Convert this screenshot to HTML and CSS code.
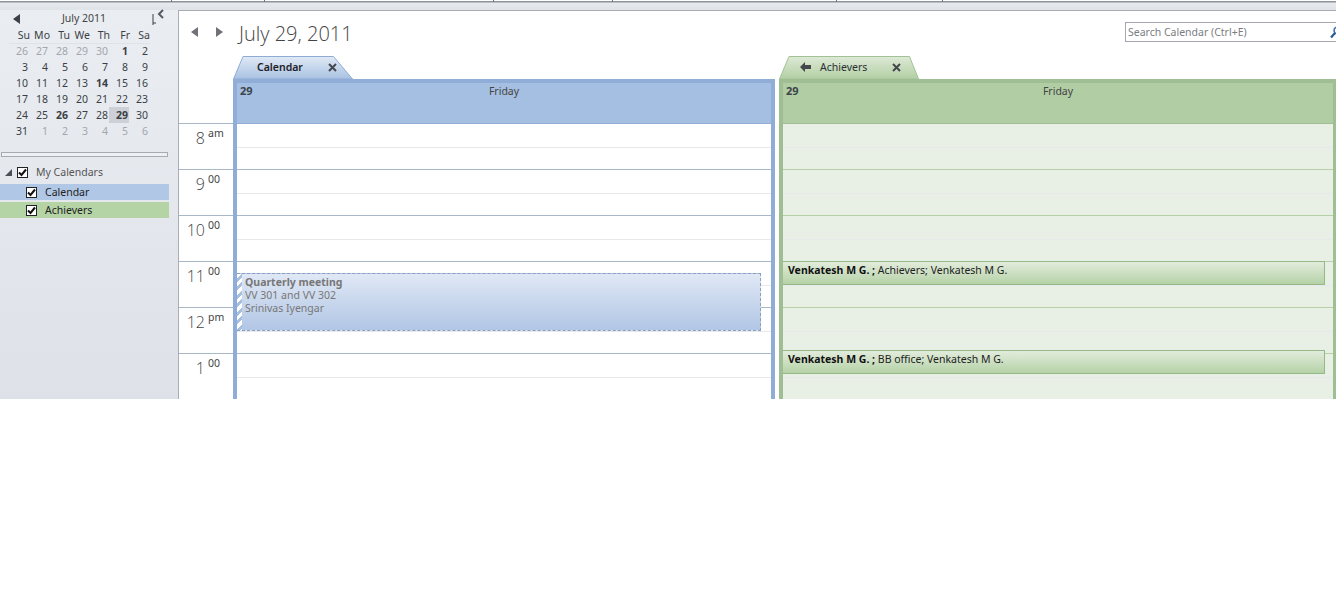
FILE: index.html
```html
<!DOCTYPE html>
<html lang="en">
<head>
<meta charset="utf-8">
<title>Calendar - July 29, 2011</title>
<link rel="stylesheet" href="styles.css">
</head>
<body>
<div class="app">
  <div class="topstrip">
    <div class="ticks">
      <span class="tick t1"></span><span class="tick t2"></span><span class="tick t3"></span><span class="tick t4"></span><span class="tick t5"></span><span class="tick t6"></span>
    </div>
  </div>
  <div class="workspace">
    <aside class="sidebar">
      <svg class="collapse" width="8" height="10" viewBox="0 0 8 10"><path d="M6 1 2 5l4 4" fill="none" stroke="#555b66" stroke-width="2"/></svg>
      <div class="month-head">
        <svg class="month-prev" width="7" height="10" viewBox="0 0 7 10"><path d="M7 0v10L0 5z" fill="#3c4048"/></svg>
        <span class="month-name">July 2011</span>
        <svg class="month-next" width="4" height="11" viewBox="0 0 4 11"><path d="M1 0v11M1 9h3" fill="none" stroke="#3c4048" stroke-width="1"/></svg>
      </div>
      <div class="minical">
        <span class="dow">Su</span><span class="dow">Mo</span><span class="dow">Tu</span><span class="dow">We</span><span class="dow">Th</span><span class="dow">Fr</span><span class="dow">Sa</span>
        <span class="d off">26</span><span class="d off">27</span><span class="d off">28</span><span class="d off">29</span><span class="d off">30</span><span class="d bold">1</span><span class="d">2</span>
        <span class="d">3</span><span class="d">4</span><span class="d">5</span><span class="d">6</span><span class="d">7</span><span class="d">8</span><span class="d">9</span>
        <span class="d">10</span><span class="d">11</span><span class="d">12</span><span class="d">13</span><span class="d bold">14</span><span class="d">15</span><span class="d">16</span>
        <span class="d">17</span><span class="d">18</span><span class="d">19</span><span class="d">20</span><span class="d">21</span><span class="d">22</span><span class="d">23</span>
        <span class="d">24</span><span class="d">25</span><span class="d bold">26</span><span class="d">27</span><span class="d">28</span><span class="d bold today">29</span><span class="d">30</span>
        <span class="d">31</span><span class="d off">1</span><span class="d off">2</span><span class="d off">3</span><span class="d off">4</span><span class="d off">5</span><span class="d off">6</span>
      </div>
      <div class="splitter"></div>
      <div class="group-row">
        <svg class="expander" width="7" height="7" viewBox="0 0 7 7"><path d="M7 0v7H0z" fill="#4a4f58"/></svg>
        <span class="check"><svg width="9" height="9" viewBox="0 0 9 9"><path d="M1 4.5 3.5 7 8 1.5" fill="none" stroke="#111" stroke-width="2"/></svg></span>
        <span class="group-label">My Calendars</span>
      </div>
      <div class="cal-row blue">
        <span class="check"><svg width="9" height="9" viewBox="0 0 9 9"><path d="M1 4.5 3.5 7 8 1.5" fill="none" stroke="#111" stroke-width="2"/></svg></span>
        <span class="cal-label">Calendar</span>
      </div>
      <div class="cal-row green">
        <span class="check"><svg width="9" height="9" viewBox="0 0 9 9"><path d="M1 4.5 3.5 7 8 1.5" fill="none" stroke="#111" stroke-width="2"/></svg></span>
        <span class="cal-label">Achievers</span>
      </div>
    </aside>
    <main class="main">
      <header class="main-head">
        <svg class="nav-arrow" width="8" height="10" viewBox="0 0 8 10"><path d="M7 0v10L0 5z" fill="#6f7277"/></svg>
        <svg class="nav-arrow next" width="8" height="10" viewBox="0 0 8 10"><path d="M1 0v10l7-5z" fill="#6f7277"/></svg>
        <h1 class="title">July 29, 2011</h1>
        <div class="search">
          <span class="search-text">Search Calendar (Ctrl+E)</span>
          <svg class="search-icon" width="12" height="13" viewBox="0 0 12 13"><circle cx="7.5" cy="4.5" r="3.4" fill="none" stroke="#3d6ea8" stroke-width="1.6"/><path d="M5 7 1 11.500" stroke="#2a5a96" stroke-width="2.200" fill="none"/></svg>
        </div>
      </header>
      <div class="schedule">
        <div class="timecol">
          <div class="time"><span class="hr">8</span><span class="mn">am</span></div>
          <div class="time"><span class="hr">9</span><span class="mn">00</span></div>
          <div class="time"><span class="hr">10</span><span class="mn">00</span></div>
          <div class="time"><span class="hr">11</span><span class="mn">00</span></div>
          <div class="time"><span class="hr">12</span><span class="mn">pm</span></div>
          <div class="time"><span class="hr">1</span><span class="mn">00</span></div>
        </div>
        <section class="calendar cal-blue">
          <div class="tab">
            <svg class="tab-shape" viewBox="0 0 120 23" preserveAspectRatio="none">
              <defs><linearGradient id="tb" x1="0" y1="0" x2="0" y2="1"><stop offset="0" stop-color="#e0e9f5"/><stop offset="1" stop-color="#a9c2e2"/></linearGradient></defs>
              <path d="M.5 23 10 .5h90.500L119.500 23z" fill="url(#tb)" stroke="#8eacd5"/>
            </svg>
            <span class="tab-label strong">Calendar</span>
            <svg class="tab-close" width="9" height="9" viewBox="0 0 9 9"><path d="M1 1l7 7M8 1 1 8" stroke="#44484f" stroke-width="2"/></svg>
          </div>
          <div class="frame">
            <div class="day-head"><span class="day-num">29</span><span class="day-name">Friday</span></div>
            <div class="slots">
              <div class="hour"></div><div class="hour"></div><div class="hour"></div><div class="hour"></div><div class="hour"></div><div class="hour"></div>
              <div class="event tentative">
                <div class="stripe"></div>
                <div class="event-body">
                  <div class="event-title">Quarterly meeting</div>
                  <div>VV 301 and VV 302</div>
                  <div>Srinivas Iyengar</div>
                </div>
              </div>
            </div>
          </div>
        </section>
        <section class="calendar cal-green">
          <div class="tab">
            <svg class="tab-shape" viewBox="0 0 140 23" preserveAspectRatio="none">
              <defs><linearGradient id="tg" x1="0" y1="0" x2="0" y2="1"><stop offset="0" stop-color="#dde9d5"/><stop offset="1" stop-color="#b2cfa4"/></linearGradient></defs>
              <path d="M.5 23 10 .5h120.500L139.500 23z" fill="url(#tg)" stroke="#a3c196"/>
            </svg>
            <svg class="tab-arrow" width="11" height="10" viewBox="0 0 11 10"><path d="M0 5l5-5v3h6v4H5v3z" fill="#44484a"/></svg>
            <span class="tab-label">Achievers</span>
            <svg class="tab-close" width="9" height="9" viewBox="0 0 9 9"><path d="M1 1l7 7M8 1 1 8" stroke="#44484a" stroke-width="2"/></svg>
          </div>
          <div class="frame">
            <div class="day-head"><span class="day-num">29</span><span class="day-name">Friday</span></div>
            <div class="slots">
              <div class="hour"></div><div class="hour"></div><div class="hour"></div><div class="hour"></div><div class="hour"></div><div class="hour"></div>
              <div class="event busy first"><b>Venkatesh M G. ;</b> Achievers; Venkatesh M G.</div>
              <div class="event busy second"><b>Venkatesh M G. ;</b> BB office; Venkatesh M G.</div>
            </div>
          </div>
        </section>
      </div>
    </main>
  </div>
</div>
</body>
</html>
```
FILE: styles.css
```css
* { box-sizing: border-box; }
html, body { margin: 0; background: #fff; }
body { font-family: "Noto Sans", "Open Sans", "Liberation Sans", sans-serif; color: #333; }

.app { height: 399px; width: 1336px; display: flex; flex-direction: column; overflow: hidden; }

.topstrip { height: 10px; flex: none; background: linear-gradient(#8f929b 0, #8f929b 2px, #e6e9ed 3px, #dfe3e8 100%); }
.ticks { display: flex; height: 1px; background: #fff; }
.tick { display: block; border-right: 1px solid #70747c; height: 2px; }
.t1 { width: 172px; } .t2 { width: 93px; } .t3 { width: 229px; } .t4 { width: 119px; } .t5 { width: 224px; } .t6 { width: 106px; }

.workspace { flex: 1; display: flex; min-height: 0; }

.sidebar { width: 178px; flex: none; position: relative; background: linear-gradient(#eaedf2, #dee2e8); font-size: 11px; }
.collapse { position: absolute; left: 157px; top: -1px; }

.month-head { height: 14px; margin-top: 1px; width: 169px; position: relative; text-align: center; color: #444; line-height: 14px; font-size: 10.500px; padding-right: 1px; }
.month-prev { position: absolute; left: 13px; top: 3px; }
.month-next { position: absolute; left: 152px; top: 3px; }

.minical { display: grid; grid-template-columns: repeat(7, 20px); grid-auto-rows: 16px; margin: 2px 0 0 9px; width: 140px; line-height: 16px; font-size: 10.500px; position: relative; color: #3c3f44; }
.dow { text-align: right; padding-right: 0; border-bottom: 1px solid #dfe2e7; height: 17px; margin-right: -1px; }
.d { text-align: right; padding-right: 1px; }
.off { color: #a3a7ad; }
.bold { font-weight: 700; }
.today { background: #cdd1d7; }
.dow + .d { margin-top: 0; }

.splitter { height: 5px; width: 167px; margin: 13px 0 0 1px; background: #eef0f3; border: 1px solid #a8acb2; }

.group-row { display: flex; align-items: center; height: 16px; margin-top: 7px; padding-left: 5px; }
.expander { flex: none; margin-right: 5px; }
.group-label { margin-left: 8px; color: #555; font-size: 10.500px; }
.check { width: 11px; height: 11px; flex: none; border: 1px solid #222; background: #fff; display: flex; align-items: center; justify-content: center; }
.cal-row { width: 169px; height: 16px; display: flex; align-items: center; padding-left: 26px; margin-top: 2px; font-size: 10.500px; color: #222; }
.group-row + .cal-row { margin-top: 4px; }
.cal-label { margin-left: 8px; }
.blue { background: #b1c7e6; }
.green { background: #b5d4a5; }

.main { flex: 1; min-width: 0; background: #fff; border-left: 1px solid #a9acb2; border-top: 1px solid #a9acb2; display: flex; flex-direction: column; }
.main-head { height: 45px; flex: none; display: flex; align-items: flex-start; padding: 15px 0 0 12px; position: relative; }
.nav-arrow { flex: none; margin-top: 1px; }
.nav-arrow.next { margin-left: 16px; }
.title { margin: -6px 0 0 16px; font-size: 20px; font-weight: 300; color: #444; line-height: 28px; font-family: "Open Sans", "Noto Sans", sans-serif; }
.search { position: absolute; left: 946px; top: 11px; right: 0; height: 20px; border: 1px solid #a4a8ae; border-right: 0; display: flex; align-items: center; padding-left: 2px; font-size: 10.500px; color: #7a7d82; }
.search-icon { position: absolute; left: 204px; top: 3px; }

.schedule { flex: 1; min-height: 0; display: flex; }
.timecol { width: 54px; flex: none; padding-top: 67px; }
.time { height: 46px; border-top: 1px solid #a8b8c8; margin-right: 0; display: flex; justify-content: flex-end; padding: 2px 7px 0 0; color: #444; }
.hr { font-size: 16px; line-height: 24px; font-weight: 300; font-family: "Open Sans", "Noto Sans", sans-serif; }
.mn { width: 18px; margin-left: 3px; font-size: 10.500px; line-height: 14px; }

.calendar { display: flex; flex-direction: column; position: relative; min-width: 0; }
.cal-blue { width: 542px; flex: none; }
.cal-green { flex: 1; margin-left: 4px; }

.tab { height: 23px; flex: none; position: relative; display: flex; align-items: center; font-size: 10.500px; color: #222; }
.tab-shape { position: absolute; left: 0; top: 0; height: 23px; }
.cal-blue .tab { width: 120px; padding: 0 0 1px 24px; }
.cal-blue .tab-shape { width: 120px; }
.cal-green .tab { width: 140px; padding: 0 0 1px 21px; }
.cal-green .tab-shape { width: 140px; }
.tab-label { position: relative; color: #2c3036; }
.tab-label.strong { font-weight: 600; color: #1e2126; }
.tab-arrow { position: relative; margin-right: 9px; }
.tab-close { position: relative; margin-left: 25px; }

.frame { flex: 1; min-height: 0; display: flex; flex-direction: column; border: 4px solid; border-bottom: 0; border-color: #8fadd7; }
.cal-green .frame { border-color: #a0be93; border-right-width: 3px; border-top-width: 4px; }
.day-head { height: 41px; flex: none; position: relative; background: #a4bfe1; border-bottom: 1px solid #8fadd7; display: flex; justify-content: center; font-size: 10.500px; color: #3e444c; line-height: 14px; padding-top: 1px; }
.cal-green .day-head { background: #b1cda4; border-bottom-color: #a0be93; }
.day-num { position: absolute; left: 3px; top: 1px; font-weight: 700; font-size: 11px; }
.day-name { color: #444; }

.slots { flex: 1; min-height: 0; position: relative; background: #fff; overflow: hidden; }
.cal-green .slots { background: #e8efe4; }
.hour { height: 46px; border-bottom: 1px solid #a8b8c8; background: linear-gradient(#fff, #fff); position: relative; }
.hour::after { content: ""; display: block; height: 23px; border-bottom: 1px solid #e6e8ec; }
.cal-green .hour { background: none; border-bottom-color: #b5d0a8; }

.event { position: absolute; font-size: 10.500px; }
.tentative { left: 0; top: 149px; width: 524px; height: 58px; display: flex; border: 1px dashed #8aa0bd; border-left: 0; background: linear-gradient(#e0e8f5, #b1c6e5); color: #777; line-height: 13px; }
.stripe { width: 5px; flex: none; background: repeating-linear-gradient(135deg, #fff 0, #fff 3px, #a8c0e0 3px, #a8c0e0 6px); }
.event-body { padding: 2px 0 0 3px; }
.event-title { font-weight: 700; }
.busy { left: 0; width: 542px; height: 24px; padding: 1px 0 0 5px; border: 1px solid #94b886; background: linear-gradient(#e2ecdc, #b5d2a7); color: #222; line-height: 15px; }
.busy b { color: #111; }
.first { top: 137px; border-left: 0; }
.second { top: 226px; border-left: 0; }
```
